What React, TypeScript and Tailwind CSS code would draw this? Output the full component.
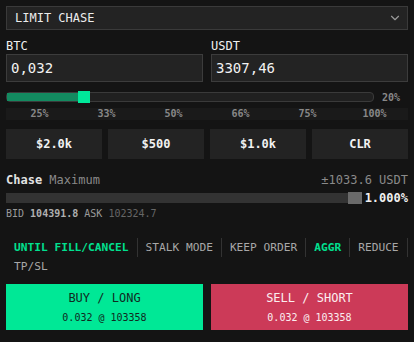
import { ChevronDown } from 'lucide-react';

const pcts = ['25%', '33%', '50%', '66%', '75%', '100%'];
const quick = ['$2.0k', '$500', '$1.0k', 'CLR'];
const modes = [
  { label: 'UNTIL FILL/CANCEL', on: true },
  { label: 'STALK MODE', on: false },
  { label: 'KEEP ORDER', on: false },
  { label: 'AGGR', on: true },
  { label: 'REDUCE', on: false },
  { label: 'TP/SL', on: false, last: true },
];

function Field({ label, value }: { label: string; value: string }) {
  return (
    <div>
      <div className="h-4 text-[12px] leading-4 text-[#f0f0f0]">{label}</div>
      <div className="flex h-7 items-center border border-[#3c3c3c] bg-[#232323] px-1 text-[14px] text-[#f2f2f2]">
        {value}
      </div>
    </div>
  );
}

export default function App() {
  return (
    <div className="h-[342px] w-[414px] overflow-hidden bg-[#141414] px-1.5 pt-1.5 font-['DejaVu_Sans_Mono',monospace]">
      <div className="flex h-6 items-center justify-between border border-[#3a3a3a] bg-[#232323] pl-2 pr-[5px] text-[12px] text-[#ececec]">
        <span>LIMIT CHASE</span>
        <ChevronDown size={14} strokeWidth={2} className="text-[#9a9a9a]" />
      </div>

      <div className="mt-2 grid grid-cols-2 gap-2">
        <Field label="BTC" value="0,032" />
        <Field label="USDT" value="3307,46" />
      </div>

      <div className="mt-2.5 flex h-[10px] items-center">
        <div className="relative h-[10px] flex-1 rounded-sm border border-[#3a3a3a] bg-[#202020]">
          <div className="h-full w-[72px] bg-[#138a60]" />
          <div className="absolute left-[71px] top-[-2px] h-3 w-3 bg-[#00e89a]" />
        </div>
        <div className="w-[34px] text-center text-[10px] font-bold text-[#888888]">20%</div>
      </div>

      <div className="mt-[6px] grid h-3 grid-cols-6 bg-[#1a1a1a] text-center text-[10px] font-bold leading-3 text-[#888888]">
        {pcts.map((p) => (
          <span key={p}>{p}</span>
        ))}
      </div>

      <div className="mt-[9px] grid grid-cols-4 gap-1.5">
        {quick.map((q) => (
          <div
            key={q}
            className="flex h-[30px] items-center justify-center bg-[#232323] text-[12px] font-bold text-[#f2f2f2]"
          >
            {q}
          </div>
        ))}
      </div>

      <div className="mt-[15px] flex h-3 items-center justify-between text-[12px] leading-3">
        <span>
          <span className="font-bold text-[#e2e2e2]">Chase</span>{' '}
          <span className="text-[#8a8a8a]">Maximum</span>
        </span>
        <span className="text-[#8a8a8a]">±1033.6 USDT</span>
      </div>

      <div className="mt-[7px] flex h-[10px] items-center">
        <div className="relative h-[10px] flex-1 bg-[#333333]">
          <div className="absolute right-0 top-[-1px] h-3 w-[14px] bg-[#6a6a6a]" />
        </div>
        <div className="w-[46px] text-right text-[12px] font-bold text-[#f0f0f0]">1.000%</div>
      </div>

      <div className="mt-[5px] h-3 text-[10px] leading-3 text-[#9a9a9a]">
        BID <span className="font-bold text-[#b0b0b0]">104391.8</span> ASK{' '}
        <span className="text-[#666666]">102324.7</span>
      </div>

      <div className="mt-[18px] flex flex-wrap">
        {modes.map((m) => (
          <div
            key={m.label}
            className={`h-[19px] px-2 text-[11.2px] leading-[19px] ${
              m.last ? '' : 'border-r border-[#333333]'
            } ${m.on ? 'font-bold text-[#00e08f]' : 'text-[#a8a8a8]'}`}
          >
            {m.label}
          </div>
        ))}
      </div>

      <div className="mt-2 grid grid-cols-2 gap-2">
        <div className="flex h-[46px] flex-col items-center bg-[#00e896] pt-[6px] text-[#102a1f]">
          <div className="h-4 text-[12px] leading-4">BUY / LONG</div>
          <div className="mt-[6px] h-3 text-[10px] leading-3">0.032 @ 103358</div>
        </div>
        <div className="flex h-[46px] flex-col items-center bg-[#cc3a58] pt-[6px] text-[#fbeef0]">
          <div className="h-4 text-[12px] leading-4">SELL / SHORT</div>
          <div className="mt-[6px] h-3 text-[10px] leading-3">0.032 @ 103358</div>
        </div>
      </div>
    </div>
  );
}
